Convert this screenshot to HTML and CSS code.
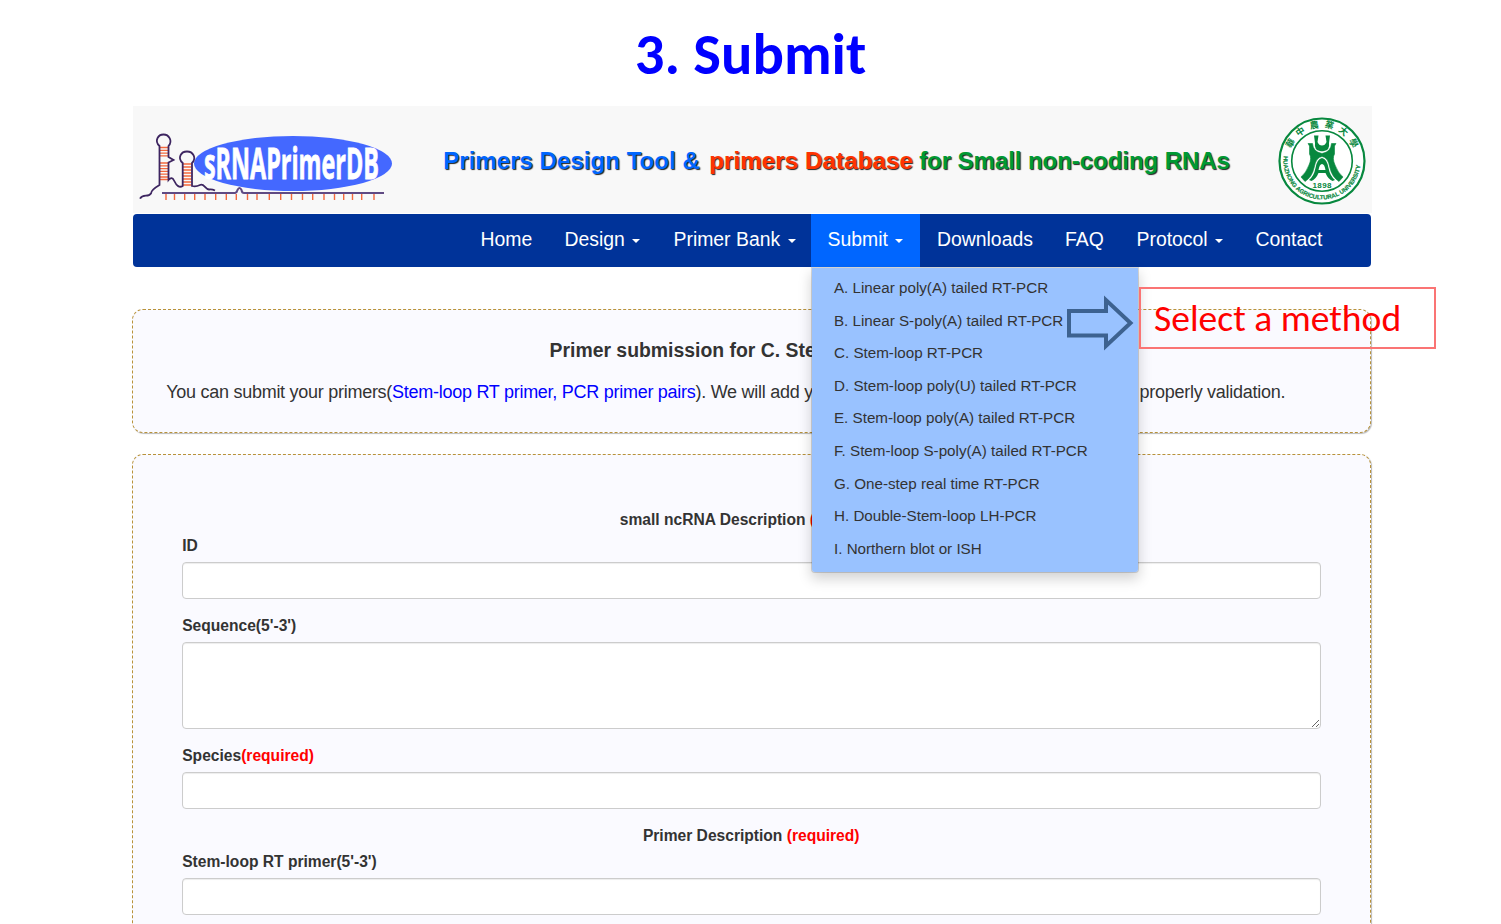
FILE: index.html
```html
<!DOCTYPE html>
<html lang="en">
<head>
<meta charset="utf-8">
<title>3. Submit</title>
<link rel="stylesheet" href="styles.css">
</head>
<body>
<h1 class="slide-title"><span>3. Submit</span></h1>
<div class="page">
  <header class="banner">
    <svg class="logo" width="260" height="76" viewBox="0 0 260 76">
      <ellipse cx="159" cy="30.500" rx="99" ry="27.500" fill="#4468ff"/>
      <path d="M26 14.500H34M26 17.300H34M26 20.100H34M26 22.900H34M26 30H34M26 32.800H34M26 35.600H34M26 38.400H34M26 41.200H34M26 44H34M26 46.500H34M49 31H57.500M49 34H57.500M49 37H57.500M49 40H57.500M49 43H57.500M49 46H57.500M49 49H57.500M49 52H57.500" stroke="#f4683c" stroke-width="1.300" fill="none"/>
      <path d="M6 65.700C9 60 14 65 17 60.500Q17 57 25.500 52V13C20 8 24 1.500 29.500 1.500C35 1.500 39 8 34.500 13V24L39.500 27L34.500 29.500V47Q38 43 40 47.500Q44 56 48.700 53V30C43 25 47 18.500 53 18.500C59 18.500 63 25 58 30V53Q62 54 66 52C70 50 71 56 75 56.500Q78 56 81 57.500" fill="none" stroke="#3d2560" stroke-width="1.800"/>
      <path d="M28 60H101Q103 59.500 103.500 57Q105.500 53 107.500 57Q108 60 110 60H250" fill="none" stroke="#604a83" stroke-width="2"/>
      <path d="M32 61V67M40.500 61V67M50.700 61V67M60.700 61V67M71 61V67M81.700 61V67M92.300 61V67M102.300 61V67M113.500 61V67M123 61V67M135.300 61V67M146.700 61V67M157.500 61V67M168.500 61V67M178.700 61V67M190 61V67M200.500 61V67M209.700 61V67M218.500 61V67M227.700 61V67M240 61V67" stroke="#f4683c" stroke-width="1.400"/>
      <text x="70" y="46" textLength="175" lengthAdjust="spacingAndGlyphs" class="logo-text">sRNAPrimerDB</text>
    </svg>
    <div class="tagline"><span class="blue">Primers Design Tool &amp;</span><span class="red">primers Database</span><span class="green">for Small non-coding RNAs</span></div>
    <svg class="seal" width="90" height="90" viewBox="-45 -45 90 90">
      <circle r="42.500" fill="#fff" stroke="#07883e" stroke-width="2.200"/>
      <circle r="30.300" fill="none" stroke="#07883e" stroke-width="1.600"/>
      <path d="M-8-25.500H-3.500L-4.500-19Q-3-15.500 0-15.500Q3-15.500 4.500-19L3.500-25.500H8L7-18Q8-11 2-10Q0-9.500-2-10Q-8-11-7-18Z" fill="#07883e"/>
      <path d="M-14-17.500H-9.500Q-9-9 0-7.500Q9-9 9.500-17.500H14L12.500-15V-7Q10-3 13 4Q16 12 21 16L17 20.500Q10 16 8 7Q6-4 0-4.500Q-6-4-8 7Q-10 16-17 20.500L-21 16Q-16 12-13 4Q-10-3-12.500-7V-15Z" fill="#07883e" stroke="#07883e" stroke-width=".6"/>
      <path d="M0-3Q5-2 6.500 7Q8 15 13 19L10.500 20Q6 18 3.500 12H-3.500Q-6 18-10.500 20L-13 19Q-8 15-6.500 7Q-5-2 0-3ZM-3.500 9H3.500Q2.500 3 0 3Q-2.500 3-3.500 9Z" fill="#07883e" fill-rule="evenodd"/>
      <text x="-9.500" y="26.700" textLength="19" class="seal-year">1898</text>
      <path id="seal-top" d="M-32.500-1A32.500 32.500 0 0 1 32.500-1" fill="none"/>
      <path id="seal-low" d="M-38.300-5A38.600 38.600 0 1 0 38.300-5" fill="none"/>
      <text class="seal-cjk"><textPath href="#seal-top" startOffset="11">華中農業大學</textPath></text>
      <text class="seal-latin"><textPath href="#seal-low" startOffset="0">HUAZHONG AGRICULTURAL UNIVERSITY</textPath></text>
    </svg>
  </header>
  <nav class="nav">
    <a class="item w-home">Home</a>
    <a class="item w-design">Design <i class="caret"></i></a>
    <a class="item w-bank">Primer Bank <i class="caret"></i></a>
    <div class="item active">Submit <i class="caret"></i>
      <ul class="menu">
        <li>A. Linear poly(A) tailed RT-PCR</li>
        <li>B. Linear S-poly(A) tailed RT-PCR</li>
        <li>C. Stem-loop RT-PCR</li>
        <li>D. Stem-loop poly(U) tailed RT-PCR</li>
        <li>E. Stem-loop poly(A) tailed RT-PCR</li>
        <li>F. Stem-loop S-poly(A) tailed RT-PCR</li>
        <li>G. One-step real time RT-PCR</li>
        <li>H. Double-Stem-loop LH-PCR</li>
        <li>I. Northern blot or ISH</li>
      </ul>
    </div>
    <a class="item w-down">Downloads</a>
    <a class="item w-faq">FAQ</a>
    <a class="item w-proto">Protocol <i class="caret"></i></a>
    <a class="item w-contact">Contact</a>
  </nav>
  <section class="panel intro">
    <h2>Primer submission for C. Stem-loop RT-PCR</h2>
    <p><span>You can submit your primers(<b>Stem-loop RT primer, PCR primer pairs</b>). We will add y</span><span>properly validation.</span></p>
  </section>
  <form class="panel form">
    <h3>small ncRNA Description <em>(required)</em></h3>
    <label>ID</label>
    <input type="text">
    <label>Sequence(5'-3')</label>
    <textarea></textarea>
    <label>Species<em>(required)</em></label>
    <input type="text">
    <h3>Primer Description <em>(required)</em></h3>
    <label>Stem-loop RT primer(5'-3')</label>
    <input type="text">
  </form>
</div>
<svg class="arrow" width="68" height="58" viewBox="0 0 68 58"><path d="M3 17H40V6L64.500 29L40 52V41.500H3Z" fill="none" stroke="#3d6290" stroke-width="4"/></svg>
<div class="callout"><span>Select a method</span></div>
</body>
</html>
```
FILE: styles.css
```css
* { box-sizing: border-box; }
body {
  margin: 0;
  height: 924px;
  position: relative;
  overflow: hidden;
  background: #fff;
  color: #333;
  font-family: "Liberation Sans", Arial, sans-serif;
}
.slide-title {
  margin: 0;
  height: 106px;
  padding-top: 22px;
  text-align: center;
  font: bold 58.6px/64px Carlito, Calibri, Lato, sans-serif;
  color: #00f;
}
.page { width: 1239px; margin-left: 132.6px; }
.banner {
  display: flex;
  height: 107px;
  background: #f8f8f8;
}
.logo { margin: 27px 0 0 1px; flex: none; overflow: visible; }
.tagline {
  flex: none;
  width: 836px;
  margin-left: 49.6px;
  padding-top: 40px;
  display: flex;
  font-weight: bold;
  font-size: 24.1px;
  line-height: 30px;
  white-space: pre;
  text-shadow: 1px 1px 1px #222;
}
.blue { color: #06f; width: 266px; }
.red { color: #f30; width: 210px; letter-spacing: .1px; }
.green { color: #093; letter-spacing: -.1px; }
.seal { flex: none; margin: 10px 0 0 -2px; }
.logo-text { font: bold 43px "Open Sans", sans-serif; fill: #fff; stroke: #fff; stroke-width: .8px; }
.seal-year { font: bold 8px "Liberation Sans", sans-serif; fill: #07883e; }
.seal-cjk { font: bold 9px "Noto Sans CJK TC", sans-serif; letter-spacing: 5px; fill: #07883e; }
.seal-latin { font: bold 6px "Liberation Sans", sans-serif; fill: #07883e; stroke: #07883e; stroke-width: .2px; }
.nav {
  display: flex;
  margin-top: 1px;
  width: 1238px;
  height: 53px;
  padding-left: 331.4px;
  background: #039;
  border-radius: 4px;
  font-size: 19.4px;
  line-height: 51px;
  color: #fff;
  white-space: nowrap;
}
.item { padding-left: 16.5px; flex: none; }
.w-home { width: 84px; }
.w-design { width: 109px; }
.w-bank { width: 154px; }
.active { width: 109.5px; background: #06f; position: relative; }
.w-down { width: 128px; }
.w-faq { width: 71.5px; }
.w-proto { width: 119px; }
.caret {
  display: inline-block;
  margin-left: 2px;
  vertical-align: middle;
  border: 4.3px solid transparent;
  border-top-color: #fff;
  border-bottom: 0;
}
.menu {
  position: absolute;
  z-index: 2;
  left: 0;
  top: 53px;
  width: 328px;
  height: 306px;
  margin: 0;
  padding: 4px 0 0 22px;
  list-style: none;
  background: #99c2ff;
  background-clip: padding-box;
  border: 1px solid rgba(0, 0, 0, .15);
  border-radius: 0 0 4px 4px;
  box-shadow: 0 6px 13px rgba(0, 0, 0, .175);
  color: #333;
  font-size: 15.2px;
  line-height: 32.6px;
}
.panel {
  margin-left: -.4px;
  border: 1px dashed #b8923a;
  border-radius: 11px;
  background: #fafaff;
  box-shadow: 1px 1px 1px #bbb;
}
.intro { margin-top: 42px; width: 1239px; height: 124px; padding: 28px 33px; }
h2 { margin: 0; padding-left: 4px; font-size: 19.4px; line-height: 25px; text-align: center; }
p { display: flex; justify-content: space-between; margin: 17px 52px 0 0; font-size: 18px; letter-spacing: -.27px; line-height: 24px; }
b { font-weight: normal; color: #00f; }
.form { display: flex; flex-direction: column; width: 1239px; margin-top: 21px; height: 500px; padding: 55px 50px 0 49px; }
h3 { margin: 0; font-size: 15.6px; line-height: 20px; text-align: center; }
em { color: #f00; font-style: normal; }
label { margin-top: 6px; font-weight: bold; font-size: 15.6px; line-height: 20px; }
input, textarea {
  display: block;
  flex: none;
  width: 1139px;
  height: 37px;
  margin: 6px 0 11px;
  border: 1px solid #ccc;
  border-radius: 4px;
  background: #fff;
  box-shadow: inset 0 1px 1px rgba(0, 0, 0, .075);
}
textarea { height: 87px; }
input + h3 { margin-top: 6px; }
.arrow { position: absolute; z-index: 3; left: 1066px; top: 294px; }
.callout {
  position: absolute;
  z-index: 3;
  left: 1139px;
  top: 287px;
  width: 297px;
  height: 62px;
  padding-left: 13px;
  border: 2px solid #fa7474;
  font: 37.6px/58px Carlito, Calibri, Lato, sans-serif;
  color: #f00;
  white-space: nowrap;
}
```
